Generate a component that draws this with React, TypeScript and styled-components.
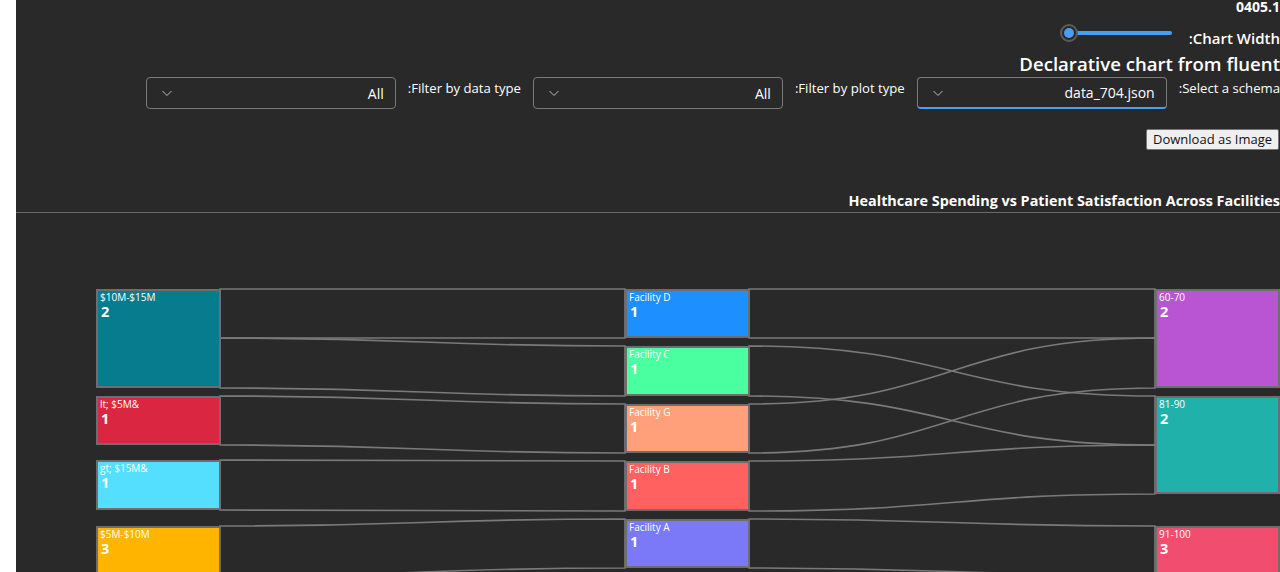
import React from 'react';
import styled, { createGlobalStyle } from 'styled-components';

const GlobalStyle = createGlobalStyle`
  html, body {
    margin: 0;
    padding: 0;
    background: #ffffff;
    overflow: hidden;
  }
  * { box-sizing: border-box; }
`;

const Page = styled.div`
  margin-left: 16px;
  height: 572px;
  background: #292929;
  color: #ffffff;
  font-family: "Open Sans", "Noto Sans", sans-serif;
  overflow: hidden;
`;

const Header = styled.div`
  display: flex;
  flex-direction: column;
  align-items: flex-end;
`;

const Version = styled.div`
  font-size: 14px;
  font-weight: 700;
  line-height: 14px;
  height: 18px;
`;

const SliderRow = styled.div`
  display: flex;
  align-items: flex-start;
  gap: 15px;
  height: 30px;
  padding-top: 5px;
`;

const Label = styled.span<{ $size?: number; $weight?: number }>`
  font-size: ${(p) => p.$size ?? 13}px;
  font-weight: ${(p) => p.$weight ?? 400};
  line-height: 20px;
  margin-top: 5px;
  white-space: nowrap;
`;

const SliderTrack = styled.div`
  position: relative;
  width: 114px;
  height: 20px;
  display: flex;
  align-items: center;
`;

const TrackFill = styled.div`
  margin-left: 10px;
  width: 102px;
  height: 4px;
  border-radius: 2px;
  background: #479ef5;
`;

const Thumb = styled.div`
  position: absolute;
  left: 0;
  top: 1px;
  width: 18px;
  height: 18px;
  border-radius: 50%;
  background: #292929;
  border: 2px solid #5c5c5c;
  display: flex;
  align-items: center;
  justify-content: center;
  &::after {
    content: '';
    width: 10px;
    height: 10px;
    border-radius: 50%;
    background: #479ef5;
  }
`;

const Title = styled.div`
  margin-top: 3px;
  font-size: 18.6px;
  font-weight: 600;
  line-height: 26px;
  height: 26px;
  white-space: nowrap;
`;

const FilterRow = styled.div`
  display: flex;
  align-items: flex-start;
  height: 50px;
`;

const FilterLabel = styled.span`
  font-size: 13.15px;
  line-height: 18px;
  padding: 0 0 0 12px;
  margin-top: 2px;
  white-space: nowrap;
`;

const Dropdown = styled.div<{ $focused?: boolean }>`
  position: relative;
  width: 250px;
  height: 32px;
  border: 1px solid #7a7a7a;
  border-bottom-color: ${(p) => (p.$focused ? '#479ef5' : '#7a7a7a')};
  border-bottom-width: ${(p) => (p.$focused ? '2px' : '1px')};
  border-radius: 4px;
  display: flex;
  align-items: center;
  justify-content: space-between;
  padding: 0 11px 0 14px;
  margin-left: 12px;
  font-size: 14px;
`;

const Chevron = styled.svg`
  width: 12px;
  height: 12px;
`;

const ButtonRow = styled.div`
  height: 46px;
  padding-right: 1px;
`;

const DownloadButton = styled.button`
  font-family: "Open Sans", "Noto Sans", sans-serif;
  font-size: 13px;
  height: 21px;
  padding: 0 6px;
  background: #efefef;
  color: #111;
  border: 1px solid #767676;
  border-radius: 2px;
  line-height: 18px;
`;

const ChartTitle = styled.div`
  margin-top: 18px;
  font-size: 14.4px;
  font-weight: 700;
  line-height: 20px;
  height: 21px;
  text-align: right;
  white-space: nowrap;
`;

const Divider = styled.div`
  margin-left: -16px;
  height: 1px;
  background: #6a6a6a;
`;

const ChartSvg = styled.svg`
  display: block;
  font-family: "Open Sans", "Noto Sans", sans-serif;
`;

type Node = { label: string; value: number; x: number; y: number; h: number; color: string };

const nodes: Node[] = [
  { label: '$10M-$15M', value: 2, x: 97, y: 290, h: 97, color: '#077c8e' },
  { label: 'lt; $5M&', value: 1, x: 97, y: 397, h: 47, color: '#da2641' },
  { label: 'gt; $15M&', value: 1, x: 97, y: 461, h: 48, color: '#54dfff' },
  { label: '$5M-$10M', value: 3, x: 97, y: 527, h: 150, color: '#ffb400' },
  { label: 'Facility D', value: 1, x: 626, y: 290, h: 47, color: '#1e8fff' },
  { label: 'Facility C', value: 1, x: 626, y: 347, h: 48, color: '#4aff9f' },
  { label: 'Facility G', value: 1, x: 626, y: 405, h: 47, color: '#ffa07a' },
  { label: 'Facility B', value: 1, x: 626, y: 462, h: 48, color: '#ff6060' },
  { label: 'Facility A', value: 1, x: 626, y: 520, h: 47, color: '#7b79f7' },
  { label: '60-70', value: 2, x: 1156, y: 290, h: 97, color: '#b954d2' },
  { label: '81-90', value: 2, x: 1156, y: 397, h: 96, color: '#20b1aa' },
  { label: '91-100', value: 3, x: 1156, y: 527, h: 150, color: '#f14d6e' },
];

// [x0, y0top, y0bottom, x1, y1top, y1bottom]
const links: number[][] = [
  [220, 289, 338, 625, 289, 338],
  [220, 338, 388, 625, 346, 396],
  [220, 396, 445, 625, 404, 453],
  [220, 460, 510, 625, 461, 511],
  [220, 526, 576, 625, 519, 568],
  [220, 576, 626, 625, 640, 690],
  [749, 289, 338, 1155, 289, 338],
  [749, 404, 453, 1155, 338, 388],
  [749, 346, 396, 1155, 396, 445],
  [749, 461, 511, 1155, 445, 494],
  [749, 519, 568, 1155, 526, 575],
];

const bandPath = ([x0, a0, b0, x1, a1, b1]: number[]) => {
  const xm = (x0 + x1) / 2;
  return `M${x0},${a0} C${xm},${a0} ${xm},${a1} ${x1},${a1} L${x1},${b1} C${xm},${b1} ${xm},${b0} ${x0},${b0} Z`;
};

function Sankey() {
  return (
    <ChartSvg width={1264} height={359} viewBox="16 213 1264 359">
      {links.map((l, i) => (
        <path key={i} d={bandPath(l)} fill="none" stroke="#7a7a7a" strokeWidth={1.6} />
      ))}
      {nodes.map((n) => (
        <g key={n.label}>
          <rect x={n.x} y={n.y} width={123} height={n.h} fill={n.color} stroke="#6e6e6e" strokeWidth={2} />
          <text x={n.x + 3} y={n.y + 11} fontSize={10} fill="#ffffff">{n.label}</text>
          <text x={n.x + 4} y={n.y + 27} fontSize={14.5} fontWeight={700} fill="#ffffff">{n.value}</text>
        </g>
      ))}
    </ChartSvg>
  );
}

const ChevronIcon = () => (
  <Chevron viewBox="0 0 12 12">
    <path d="M1.5 4 L6 8.5 L10.5 4" fill="none" stroke="#bdbdbd" strokeWidth={1} />
  </Chevron>
);

export default function App() {
  return (
    <Page>
      <GlobalStyle />
      <Header>
        <Version>0405.1</Version>
        <SliderRow>
          <SliderTrack>
            <TrackFill />
            <Thumb />
          </SliderTrack>
          <Label $size={15} $weight={600}>:Chart Width</Label>
        </SliderRow>
        <Title>Declarative chart from fluent</Title>
        <FilterRow>
          <Dropdown>
            <ChevronIcon />
            <span>All</span>
          </Dropdown>
          <FilterLabel>:Filter by data type</FilterLabel>
          <Dropdown>
            <ChevronIcon />
            <span>All</span>
          </Dropdown>
          <FilterLabel>:Filter by plot type</FilterLabel>
          <Dropdown $focused>
            <ChevronIcon />
            <span>data_704.json</span>
          </Dropdown>
          <FilterLabel>:Select a schema</FilterLabel>
        </FilterRow>
        <ButtonRow>
          <DownloadButton>Download as Image</DownloadButton>
        </ButtonRow>
      </Header>
      <ChartTitle>
        Healthcare Spending vs Patient Satisfaction Across Facilities
      </ChartTitle>
      <Divider />
      <Sankey />
    </Page>
  );
}
